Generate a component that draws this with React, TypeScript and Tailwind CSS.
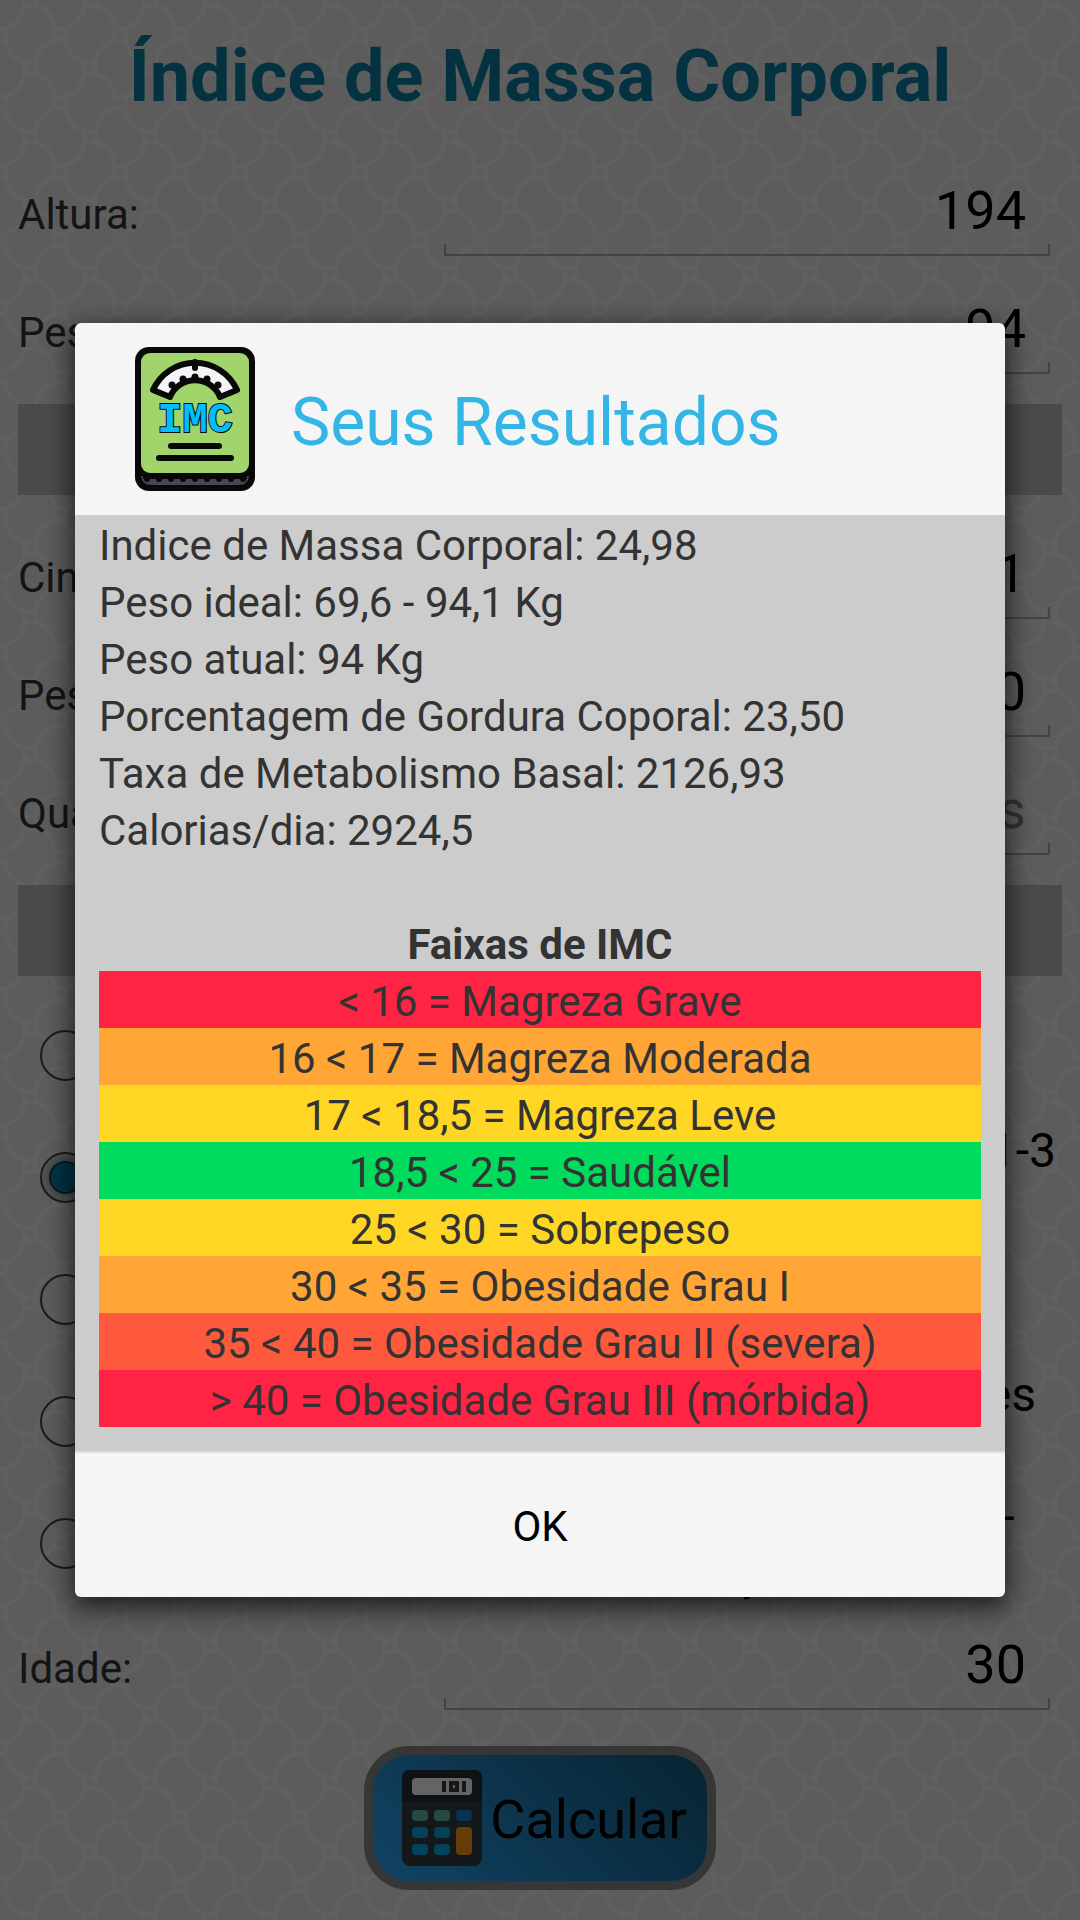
import React from "react";

const radioOptions = [
  { id: "sedentario", first: "Sedentário", second: "" },
  { id: "leve", first: "Levemente ativo - Exercícios leves entre 1-3", second: "dias na semana" },
  { id: "moderado", first: "Moderado - Exercícios 3-5 dias", second: "na semana" },
  { id: "muito", first: "Muito ativo - Exercícios robustos 5-6 vezes", second: "na semana" },
  { id: "extremo", first: "Extremamente ativo - Exercícios severos -", second: "trabalho ou com muito esforço" },
];

const results = [
  "Indice de Massa Corporal: 24,98",
  "Peso ideal: 69,6 - 94,1 Kg",
  "Peso atual: 94 Kg",
  "Porcentagem de Gordura Coporal: 23,50",
  "Taxa de Metabolismo Basal: 2126,93",
  "Calorias/dia: 2924,5",
];

const ranges = [
  { text: "< 16 = Magreza Grave", color: "bg-[#ff2443]" },
  { text: "16 < 17 = Magreza Moderada", color: "bg-[#ffa636]" },
  { text: "17 < 18,5 = Magreza Leve", color: "bg-[#ffd624]" },
  { text: "18,5 < 25 = Saudável", color: "bg-[#00db5e]" },
  { text: "25 < 30 = Sobrepeso", color: "bg-[#ffd624]" },
  { text: "30 < 35 = Obesidade Grau I", color: "bg-[#ffa636]" },
  { text: "35 < 40 = Obesidade Grau II (severa)", color: "bg-[#ff593d]" },
  { text: "> 40 = Obesidade Grau III (mórbida)", color: "bg-[#ff2443]" },
];

function ScalePattern() {
  return (
    <svg className="absolute inset-0 -z-10 h-full w-full" aria-hidden="true">
      <defs>
        <pattern id="scales" width="60" height="68.571" patternUnits="userSpaceOnUse">
          <g fill="none" stroke="#f1f1f1" strokeWidth="4">
            <path d="M36 5.5 A24 24 0 0 1 54.5 29" />
            <path d="M24.5 5 A26 26 0 0 1 5 28" />
            <path d="M5.5 40 A25 25 0 0 0 25 62.5" />
            <path d="M55 40 A25 25 0 0 0 35.5 63" />
            <rect x="24.5" y="-5.5" width="11" height="11" />
            <rect x="24.5" y="63" width="11" height="11" />
            <rect x="-5.5" y="28.8" width="11" height="11" />
            <rect x="54.5" y="28.8" width="11" height="11" />
          </g>
        </pattern>
      </defs>
      <rect width="100%" height="100%" fill="#e6e6e6" />
      <rect width="100%" height="100%" fill="url(#scales)" />
    </svg>
  );
}

function Field({ id, label, value, placeholder }: { id: string; label: string; value?: string; placeholder?: string }) {
  return (
    <div className="flex h-[118px] items-baseline pr-3">
      <label htmlFor={id} className="w-[426px] shrink-0 whitespace-nowrap text-[42px] leading-[50px] text-[#333333]">
        {label}
      </label>
      <div className="relative min-w-0 flex-1">
        <input
          id={id}
          defaultValue={value}
          placeholder={placeholder}
          className="block h-[102px] w-full bg-transparent pt-6 pr-6 pb-[14px] text-right text-[54px] leading-[64px] text-black outline-none placeholder:text-[#808080]"
        />
        <span className="pointer-events-none absolute inset-x-0 bottom-0 h-3 border-x-2 border-b-2 border-[#a8a8a8]" />
      </div>
    </div>
  );
}

function BmiIcon() {
  return (
    <svg viewBox="0 0 120 144" className="h-36 w-[120px]" aria-hidden="true">
      <rect width="120" height="144" rx="14" fill="#080808" />
      <path d="M6 129 Q7 138 16 138 H104 Q113 138 114 129 Z" fill="#434852" />
      <g fill="#080808">
        {[12, 24, 36, 48, 60, 72, 84, 96, 108].map((x) => (
          <circle key={x} cx={x} cy="132" r="3" />
        ))}
        <rect x="8" y="124" width="104" height="8" />
      </g>
      <rect x="6" y="6" width="108" height="120" rx="9" fill="#a1d46b" />
      <path
        d="M18 43 A46 46 0 0 1 102 43 L85 50 A27 27 0 0 0 35 50 Z"
        fill="#f4f4f8"
        stroke="#080808"
        strokeWidth="6"
        strokeLinejoin="round"
      />
      <path d="M60 15 V21" stroke="#080808" strokeWidth="6" strokeLinecap="round" />
      <g fill="#080808">
        <circle cx="37" cy="38" r="3.5" />
        <circle cx="48" cy="32" r="3.5" />
        <circle cx="60" cy="30" r="3.5" />
        <circle cx="72" cy="32" r="3.5" />
        <circle cx="83" cy="38" r="3.5" />
      </g>
      <text
        x="60"
        y="85"
        textAnchor="middle"
        fontFamily="Liberation Mono, monospace"
        fontSize="42"
        fontWeight="700"
        fill="#00bfff"
        stroke="#080808"
        strokeWidth="2"
        paintOrder="stroke"
      >
        IMC
      </text>
      <g stroke="#080808" strokeWidth="6" strokeLinecap="round">
        <path d="M36 99 H84" />
        <path d="M24 111 H96" />
      </g>
    </svg>
  );
}

function CalculatorIcon() {
  return (
    <svg viewBox="0 0 80 96" className="h-24 w-20" aria-hidden="true">
      <rect width="80" height="96" rx="8" fill="#333c43" />
      <path d="M0 32 V8 Q0 0 8 0 H72 Q80 0 80 8 V32 Z" fill="#262d33" />
      <rect x="10" y="8" width="60" height="17" rx="4" fill="#fafafa" />
      <g stroke="#333c43" strokeWidth="4" fill="none">
        <path d="M42 11 V22" />
        <path d="M62 11 V22" />
        <rect x="49" y="13" width="6" height="7" />
      </g>
      <g fill="#5fb8a0">
        <rect x="10" y="40" width="16" height="11" rx="4" />
        <rect x="32" y="40" width="16" height="11" rx="4" />
      </g>
      <rect x="54" y="40" width="16" height="11" rx="4" fill="#0a7ad1" />
      <g fill="#00a9e0">
        <rect x="10" y="57" width="16" height="11" rx="4" />
        <rect x="32" y="57" width="16" height="11" rx="4" />
        <rect x="10" y="74" width="16" height="11" rx="4" />
        <rect x="32" y="74" width="16" height="11" rx="4" />
      </g>
      <rect x="54" y="57" width="16" height="28" rx="4" fill="#fa9a14" />
    </svg>
  );
}

export default function App() {
  return (
    <div className="relative isolate min-h-screen overflow-hidden font-[Roboto,sans-serif]">
      <ScalePattern />
      <main className="px-[18px] pb-[30px]">
        <h1 className="pt-[35px] pb-[35px] text-center text-[72px] leading-[84px] font-bold text-[#0a7da0]">
          Índice de Massa Corporal
        </h1>
        <Field id="altura" label="Altura:" value="194" />
        <Field id="peso" label="Peso:" value="94" />
        <div className="mt-[14px] mb-[22px] h-[91px] bg-[#b9b9b9]" />
        <Field id="cintura" label="Cintura:" value="91" />
        <Field id="pescoco" label="Pescoço:" value="40" />
        <Field id="quadril" label="Quadril:" placeholder="cms" />
        <div className="mt-[14px] mb-[18px] h-[91px] bg-[#b9b9b9]" />
        <div role="radiogroup" aria-label="Nível de atividade">
          {radioOptions.map((o) => (
            <label key={o.id} className="flex h-[122px] items-center gap-[38px] pl-[22px]">
              <input
                type="radio"
                name="atividade"
                defaultChecked={o.id === "leve"}
                className="size-[51px] shrink-0 appearance-none rounded-full border-2 border-[#444444] checked:bg-[radial-gradient(circle,#006f9e_0px,#0088b8_14px,#333333_15px,#333333_16px,#9fb8c4_17px,#d0d8dc_24px)]"
              />
              <span className="pt-1 text-[48px] leading-[56px] text-black">
                <span className="block whitespace-nowrap">{o.first}</span>
                <span className="block whitespace-nowrap">{o.second}</span>
              </span>
            </label>
          ))}
        </div>
        <div className="mt-1">
          <Field id="idade" label="Idade:" value="30" />
        </div>
        <button className="mx-auto mt-5 flex h-36 items-center rounded-[45px] border-[9px] border-[#888888] bg-linear-45 from-[#2ba8fa] to-[#145a80] pr-5 pl-[29px]">
          <CalculatorIcon />
          <span className="pt-1 pl-2 text-[54px] leading-[64px] text-black">Calcular</span>
        </button>
      </main>

      <div className="absolute inset-0 flex items-center bg-black/60 px-[75px]">
        <section
          role="dialog"
          aria-modal="true"
          aria-labelledby="titulo"
          className="w-full overflow-hidden rounded-md bg-[#f5f5f5] shadow-[0_8px_26px_2px_rgba(0,0,0,0.7)]"
        >
          <header className="flex items-center py-6 pl-[60px]">
            <BmiIcon />
            <h2 id="titulo" className="pt-2 pl-9 text-[66px] leading-[78px] text-[#33b5e5]">
              Seus Resultados
            </h2>
          </header>
          <div className="bg-[#cccccc] px-6 pb-6 text-[42px] leading-[53px] text-[#333333]">
            {results.map((r) => (
              <p key={r} className="pt-1">
                {r}
              </p>
            ))}
            <table className="mt-[57px] w-full text-center">
              <caption className="pt-1 font-bold">Faixas de IMC</caption>
              <tbody>
                {ranges.map((r) => (
                  <tr key={r.text} className={r.color}>
                    <td className="p-0 pt-1">{r.text}</td>
                  </tr>
                ))}
              </tbody>
            </table>
          </div>
          <button className="h-[146px] w-full border-t-2 border-[#dddddd] pt-0.5 text-[42px] text-black">OK</button>
        </section>
      </div>
    </div>
  );
}
